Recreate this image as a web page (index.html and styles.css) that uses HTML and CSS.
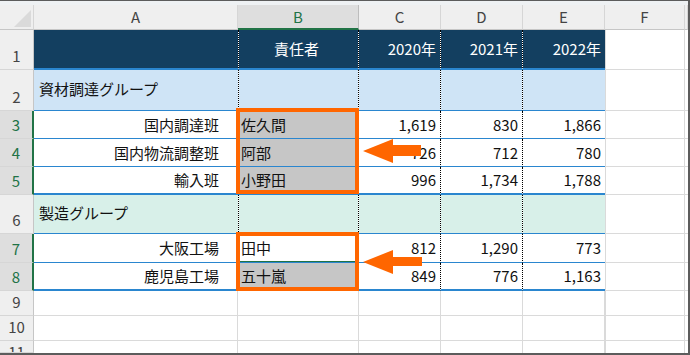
FILE: index.html
```html
<!DOCTYPE html>
<html lang="ja">
<head>
<meta charset="utf-8">
<link rel="stylesheet" href="styles.css">
</head>
<body>
<div class="frame">
  <div class="strip"></div>
  <div class="grid">
    <!-- column headers -->
    <div class="c corner"><svg class="tri" width="34" height="25" viewBox="0 0 34 25"><polygon points="14,22 31,22 31,5" fill="#dadada"/></svg></div>
    <div class="c ch">A</div>
    <div class="c ch sel">B</div>
    <div class="c ch">C</div>
    <div class="c ch">D</div>
    <div class="c ch">E</div>
    <div class="c ch">F</div>
    <div class="c ch"></div>

    <!-- row 1 -->
    <div class="c rh">1</div>
    <div class="c hd"></div>
    <div class="c hd ctr dot-l dot-r">責任者</div>
    <div class="c hd r dot-r">2020年</div>
    <div class="c hd r dot-r">2021年</div>
    <div class="c hd r">2022年</div>
    <div class="c f"></div>
    <div class="c gx"></div>

    <!-- row 2 -->
    <div class="c rh">2</div>
    <div class="c g2 lbl">資材調達グループ</div>
    <div class="c g2 dot-l dot-r"></div>
    <div class="c g2 dot-r"></div>
    <div class="c g2 dot-r"></div>
    <div class="c g2"></div>
    <div class="c f"></div>
    <div class="c gx"></div>

    <!-- row 3 -->
    <div class="c rh sel">3</div>
    <div class="c d r ind">国内調達班</div>
    <div class="c d nm selc">佐久間</div>
    <div class="c d r num dot-r">1,619</div>
    <div class="c d r num dot-r">830</div>
    <div class="c d r num">1,866</div>
    <div class="c f"></div>
    <div class="c gx"></div>

    <!-- row 4 -->
    <div class="c rh sel">4</div>
    <div class="c d r ind">国内物流調整班</div>
    <div class="c d nm selc">阿部</div>
    <div class="c d r num dot-r">726</div>
    <div class="c d r num dot-r">712</div>
    <div class="c d r num">780</div>
    <div class="c f"></div>
    <div class="c gx"></div>

    <!-- row 5 -->
    <div class="c rh sel">5</div>
    <div class="c d last r ind">輸入班</div>
    <div class="c d last nm selc">小野田</div>
    <div class="c d last r num dot-r">996</div>
    <div class="c d last r num dot-r">1,734</div>
    <div class="c d last r num">1,788</div>
    <div class="c f"></div>
    <div class="c gx"></div>

    <!-- row 6 -->
    <div class="c rh">6</div>
    <div class="c g6 lbl">製造グループ</div>
    <div class="c g6 dot-l dot-r"></div>
    <div class="c g6 dot-r"></div>
    <div class="c g6 dot-r"></div>
    <div class="c g6"></div>
    <div class="c f"></div>
    <div class="c gx"></div>

    <!-- row 7 -->
    <div class="c rh sel">7</div>
    <div class="c d r ind">大阪工場</div>
    <div class="c d nm active">田中</div>
    <div class="c d r num dot-r">812</div>
    <div class="c d r num dot-r">1,290</div>
    <div class="c d r num">773</div>
    <div class="c f"></div>
    <div class="c gx"></div>

    <!-- row 8 -->
    <div class="c rh sel">8</div>
    <div class="c d last r ind">鹿児島工場</div>
    <div class="c d last nm selc">五十嵐</div>
    <div class="c d last r num dot-r">849</div>
    <div class="c d last r num dot-r">776</div>
    <div class="c d last r num">1,163</div>
    <div class="c f"></div>
    <div class="c gx"></div>

    <!-- row 9 -->
    <div class="c rh">9</div>
    <div class="c e ea"></div>
    <div class="c e"></div>
    <div class="c e"></div>
    <div class="c e"></div>
    <div class="c e"></div>
    <div class="c f"></div>
    <div class="c gx"></div>

    <!-- row 10 -->
    <div class="c rh">10</div>
    <div class="c e ea"></div>
    <div class="c e"></div>
    <div class="c e"></div>
    <div class="c e"></div>
    <div class="c e"></div>
    <div class="c f"></div>
    <div class="c gx"></div>

    <!-- row 11 -->
    <div class="c rh top">11</div>
    <div class="c e ea nb"></div>
    <div class="c e nb"></div>
    <div class="c e nb"></div>
    <div class="c e nb"></div>
    <div class="c e nb"></div>
    <div class="c f nb"></div>
    <div class="c gx nb"></div>
  </div>

  <div class="box box1"></div>
  <div class="box box2"></div>
  <svg class="arrow arrow1" width="60" height="26" viewBox="0 0 60 26"><polygon points="1,13 31,1 31,7 59,7 59,18 31,18 31,25" fill="#ff6600"/></svg>
  <svg class="arrow arrow2" width="60" height="26" viewBox="0 0 60 26"><polygon points="1,13 31,1 31,8 61,8 61,17 31,17 31,25" fill="#ff6600"/></svg>
</div>
</body>
</html>
```

FILE: styles.css
```css
* { box-sizing: border-box; }

html, body {
  margin: 0;
  padding: 0;
  background: #ffffff;
}

body {
  font-family: "Noto Sans CJK JP", "Noto Sans", sans-serif;
  font-size: 15px;
  line-height: 20px;
  color: #111;
}

.frame {
  position: relative;
  width: 690px;
  height: 355px;
  border-top: 1px solid #5c5c5c;
  border-right: 2px solid #5c5c5c;
  border-bottom: 2px solid #5c5c5c;
  background: #ffffff;
  overflow: hidden;
}

.strip {
  height: 4px;
  background: #eef1f3;
}

.grid {
  display: grid;
  grid-template-columns: 34px 204px 121px 82px 82px 82px 80px 1fr;
  grid-template-rows: 25px 40px 41px 28px 28px 28px 39px 29px 28px 25px 25px 12px;
  background: #ffffff;
}

.c {
  display: flex;
  align-items: center;
  overflow: hidden;
  white-space: nowrap;
  background-clip: padding-box;
  min-width: 0;
}

.r { justify-content: flex-end; }
.ctr { justify-content: center; }

/* column headers */
.ch {
  background-color: #efefef;
  justify-content: center;
  color: #444;
  border-right: 1px solid #d6d6d6;
  border-bottom: 1px solid #c6c6c6;
}
.ch.sel {
  background-color: #dedede;
  color: #217346;
  border-right-color: #bdbdbd;
  border-bottom: 2px solid #217346;
}
.corner {
  background-color: #efefef;
  border-right: 1px solid #d6d6d6;
  border-bottom: 1px solid #c6c6c6;
  position: relative;
}
.tri {
  position: absolute;
  left: 0;
  top: 0;
}

/* row headers */
.rh {
  background-color: #efefef;
  color: #444;
  justify-content: center;
  align-items: flex-end;
  padding-bottom: 3px;
  border-right: 1px solid #c6c6c6;
  border-bottom: 1px solid #d6d6d6;
}
.rh.sel {
  background-color: #dedede;
  color: #217346;
  border-right: 2px solid #217346;
}
.rh.top {
  align-items: flex-start;
  padding-top: 1px;
  padding-bottom: 0;
}

/* header row 1 */
.hd {
  background-color: #133f60;
  color: #ffffff;
  border-bottom: 2px solid #2a86cf;
  padding-right: 4px;
}

/* group rows */
.g2 {
  background-color: #cfe4f6;
  border-bottom: 1px solid #2a86cf;
}
.g6 {
  background-color: #d8f0e9;
  border-bottom: 1px solid #2a86cf;
}
.lbl {
  padding-left: 5px;
  padding-bottom: 2px;
}

/* data rows */
.d {
  background-color: #ffffff;
  border-bottom: 1px solid #2a86cf;
}
.d.last {
  border-bottom-width: 2px;
}
.ind { padding-right: 19px; }
.num { padding-right: 4px; }
.nm { padding-left: 3px; }
.selc { background-color: #c6c6c6; }
.active {
  background-color: #ffffff;
  box-shadow: inset 0 -1px 0 #217346;
}

.dot-l { border-left: 1px dotted #000; }
.dot-r { border-right: 1px dotted #000; }

/* empty grid */
.e {
  border-right: 1px solid #dadada;
  border-bottom: 1px solid #dadada;
}
.ea { }
.f {
  border-left: 1px solid #dadada;
  border-right: 1px solid #dadada;
  border-bottom: 1px solid #dadada;
}
.gx {
  border-bottom: 1px solid #dadada;
}
.nb { border-bottom: none; }

/* overlays */
.box {
  position: absolute;
  border: 4px solid #ff6600;
  left: 236px;
  width: 123px;
}
.box1 { top: 107px; height: 86px; }
.box2 { top: 231px; height: 59px; }

.arrow {
  position: absolute;
  left: 362px;
}
.arrow1 { top: 137px; }
.arrow2 { top: 248px; }
```
